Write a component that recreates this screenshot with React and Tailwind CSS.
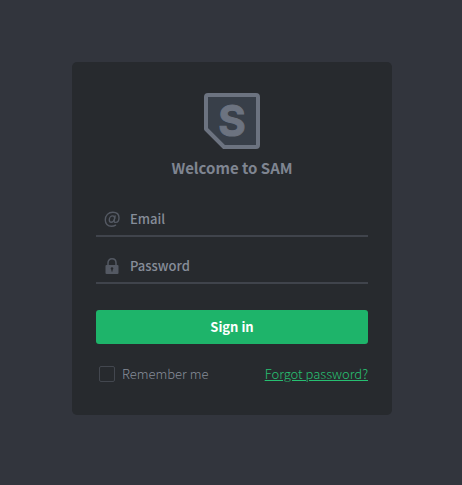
import React from "react";

function Logo() {
  return (
    <svg width="56" height="56" viewBox="0 0 56 56" className="overflow-visible" role="img" aria-label="SAM">
      <path
        d="M4 2H52Q54 2 54 4V52Q54 54 52 54H20L2 36V4Q2 2 4 2Z"
        fill="#383f49"
        stroke="#6c7380"
        strokeWidth="4"
        strokeLinejoin="round"
      />
      <text
        x="28"
        y="43"
        textAnchor="middle"
        fill="#6c7380"
        stroke="#6c7380"
        strokeWidth="1"
        className="font-['Inter',sans-serif] text-[42px] font-bold"
      >
        S
      </text>
    </svg>
  );
}

function AtIcon() {
  return (
    <svg width="16" height="16" viewBox="0 0 16 16" fill="none" stroke="#545963" strokeWidth="1.4" strokeLinecap="round" aria-hidden="true">
      <path d="M11.6 14.2C10.3 15 9 15.3 7.5 15.3C3.600 15.3 1.300 12.700 1.300 8.900C1.300 4.300 4.400 1.300 8.800 1.300C12.600 1.300 15 3.300 15 6.700C15 9.700 13.300 11.400 11.600 11.400C10.300 11.400 9.900 10.600 10.200 9.300L11.100 5" />
      <path d="M10.700 7.200C10.600 5.700 9.900 4.900 8.700 4.900C6.700 4.900 5.300 6.800 5.300 8.900C5.300 10.300 6 11.200 7.200 11.200C8.700 11.200 9.900 9.900 10.300 8.600" />
    </svg>
  );
}

function LockIcon() {
  return (
    <svg width="16" height="16" viewBox="0 0 16 16" aria-hidden="true">
      <path d="M4 7.500V5C4 2.500 5.500 .8 8 .8S12 2.500 12 5V7.500" fill="none" stroke="#545963" strokeWidth="1.500" />
      <rect x="1.500" y="7" width="13" height="9" rx="1" fill="#545963" />
      <circle cx="8" cy="10.500" r="1.300" fill="#272a2e" />
      <path d="M7.400 10.500H8.600V13.500H7.400Z" fill="#272a2e" />
    </svg>
  );
}

function Field({ id, type, label, icon }) {
  return (
    <div className="flex h-9 items-center gap-2.5 border-b-2 border-[#40444c] pl-2">
      <label htmlFor={id} aria-label={label} className="pt-0.5">
        {icon}
      </label>
      <input
        id={id}
        type={type}
        placeholder={label}
        className="h-6 min-w-0 flex-1 bg-transparent text-[13px] font-medium text-[#868d99] outline-none placeholder:text-[#868d99] placeholder:opacity-100"
      />
    </div>
  );
}

export default function App() {
  return (
    <main className="flex min-h-screen justify-center bg-[#32353d] pt-[62px] pr-6 pb-[70px] pl-[26px] font-['Noto_Sans_CJK_SC',sans-serif]">
      <form className="w-full max-w-80 self-start rounded-[5px] bg-[#272a2e] px-6 pt-[31px] pb-[31px]" onSubmit={(e) => e.preventDefault()}>
        <div className="flex justify-center">
          <Logo />
        </div>
        <h1 className="mt-[7px] text-center text-[15px] leading-6 font-bold text-[#7f8591]">Welcome to SAM</h1>
        <div className="mt-[21px] flex flex-col gap-[11px]">
          <Field id="email" type="email" label="Email" icon={<AtIcon />} />
          <Field id="password" type="password" label="Password" icon={<LockIcon />} />
        </div>
        <button type="submit" className="mt-[26px] block h-[34px] w-full rounded-[3px] bg-[#1eb46a] text-[13px] font-bold text-white">
          Sign in
        </button>
        <div className="mt-5 flex h-5 items-center justify-between pl-[3px] text-[13px] leading-5 font-light">
          <label htmlFor="remember" className="flex items-center gap-[7px] text-[#868d99]">
            <input
              id="remember"
              type="checkbox"
              className="size-4 appearance-none rounded-[2px] border border-[#43474f] checked:bg-[#1eb46a]"
            />
            Remember me
          </label>
          <a href="#forgot" className="text-[#27c072] underline">
            Forgot password?
          </a>
        </div>
      </form>
    </main>
  );
}
